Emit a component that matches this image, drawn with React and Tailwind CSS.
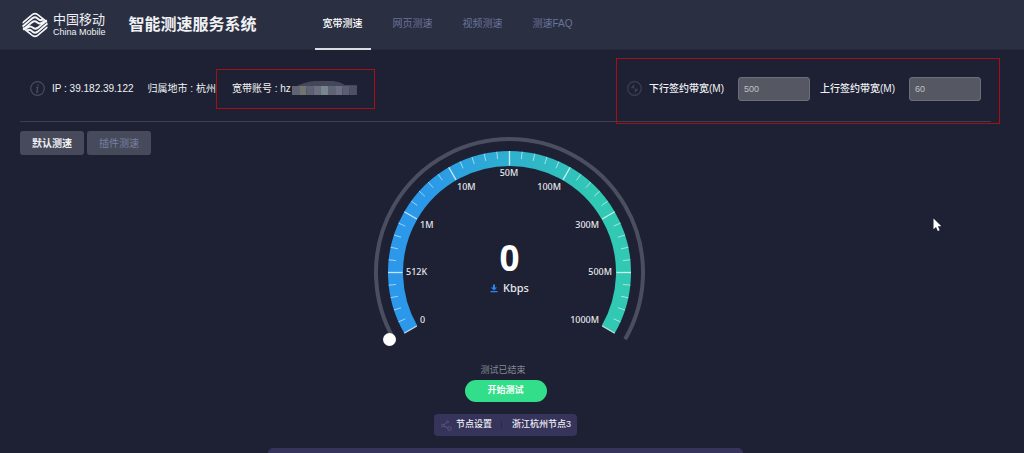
const NAV = ["宽带测速", "网页测速", "视频测速", "测速FAQ"];

// gauge geometry
const CX = 143.5;
const CY = 141.5;
const TRACK_R = 133.5;
const BAND_R = 114;
const BAND_OUTER = 121.5;

const LABELS = [
  { text: "0", x: 54, y: 192, anchor: "start" },
  { text: "512K", x: 40, y: 144, anchor: "start" },
  { text: "1M", x: 54, y: 97, anchor: "start" },
  { text: "10M", x: 91, y: 59, anchor: "start" },
  { text: "50M", x: 143, y: 45, anchor: "middle" },
  { text: "100M", x: 195, y: 59, anchor: "end" },
  { text: "300M", x: 233, y: 97, anchor: "end" },
  { text: "500M", x: 246, y: 144, anchor: "end" },
  { text: "1000M", x: 233, y: 192, anchor: "end" },
];

const polar = (r, deg) => {
  const a = (deg * Math.PI) / 180;
  return [CX + r * Math.cos(a), CY + r * Math.sin(a)];
};

const arc = (r) => {
  const [x1, y1] = polar(r, 150);
  const [x2, y2] = polar(r, 30);
  return `M${x1} ${y1} A${r} ${r} 0 1 1 ${x2} ${y2}`;
};

const TICKS = Array.from({ length: 41 }, (_, i) => {
  const major = i % 5 === 0;
  const deg = 150 + i * 6;
  const [x1, y1] = polar(BAND_OUTER, deg);
  const [x2, y2] = polar(major ? 107 : 114, deg);
  return { major, x1, y1, x2, y2 };
});

// upper half of the emblem, the lower half is the same turned by 180deg
function LogoWaves() {
  return (
    <>
      <path d="M1 33 L31 8 Q39 2 47 8 L75 30" strokeWidth="5" />
      <path d="M1 44 L31 19 Q39 13 46 19 L51 23 Q57 27 63 22" strokeWidth="6" />
      <path d="M2 54 L30 31 Q38 25 45 31 Q53 38 61 32 L68 26" strokeWidth="6" />
    </>
  );
}

function Logo() {
  return (
    <svg width="26" height="26" viewBox="0 0 78 78" fill="none" stroke="#f4f5f8">
      <clipPath id="logo-clip">
        <path d="M28 3 Q39 -3 50 3 L70 18 Q78 26 78 39 Q78 52 70 60 L50 75 Q39 81 28 75 L8 60 Q0 52 0 39 Q0 26 8 18Z" />
      </clipPath>
      <g clipPath="url(#logo-clip)">
        <LogoWaves />
        <g transform="rotate(180 39 39)">
          <LogoWaves />
        </g>
      </g>
    </svg>
  );
}

function Mosaic() {
  const colors = ["#5f6475", "#70736f", "#5d6174", "#6a6f80", "#78868f", "#5f6376", "#6c6f83", "#5a5e70", "#4d5165"];
  return (
    <svg width="66" height="16" viewBox="0 0 66 16" aria-hidden="true">
      <path d="M2 7 Q12 1 24 0 H42 Q50 1 54 4 H66 V7Z" fill="#434759" />
      {colors.map((c, i) => (
        <rect key={i} x={1 + i * 7.2} y="5" width="7.3" height="9" fill={c} />
      ))}
    </svg>
  );
}

function Gauge() {
  return (
    <svg width="279" height="221" viewBox="0 0 279 221" className="font-['Noto_Sans',sans-serif]">
      <defs>
        <linearGradient id="band" gradientUnits="userSpaceOnUse" x1="60" y1="0" x2="230" y2="0">
          <stop offset="0" stopColor="#2b98ea" />
          <stop offset="1" stopColor="#31c9b3" />
        </linearGradient>
      </defs>
      <path d={arc(TRACK_R)} fill="none" stroke="#4b4e5f" strokeWidth="4" />
      <path d={arc(BAND_R)} fill="none" stroke="url(#band)" strokeWidth="15" />
      {TICKS.map(({ major, ...t }, i) => (
        <line key={i} {...t} stroke="#fff" strokeOpacity={major ? 0.75 : 0.55} strokeWidth={major ? 1.3 : 1} />
      ))}
      <circle cx="23.5" cy="208.5" r="6.5" fill="#fff" />
      {LABELS.map((l) => (
        <text key={l.text} x={l.x} y={l.y} textAnchor={l.anchor} fontSize="9" fontWeight="500" fill="#e6e7ec">
          {l.text}
        </text>
      ))}
      <text x={CX} y="140" textAnchor="middle" fontSize="35" fontWeight="700" fill="#fff">
        0
      </text>
      <path d="M127 153.5 h2 v3 h2.2 l-3.2 3 l-3.2 -3 h2.2z M124.5 160 h7 v1.2 h-7z" fill="#2b85f0" />
      <text x="137" y="161" fontSize="11" fontWeight="500" fill="#e6e7ec">
        Kbps
      </text>
    </svg>
  );
}

function BandwidthField({ id, label, value }) {
  return (
    <div className="flex items-center gap-[14px]">
      <label htmlFor={id} className="font-medium whitespace-nowrap">
        {label}
      </label>
      <input
        id={id}
        defaultValue={value}
        className="h-6 w-18 rounded-[3px] border border-[#6c6f7b] bg-[#555863] px-[5px] text-[9px] text-[#c0c1c5] outline-none"
      />
    </div>
  );
}

export default function App() {
  return (
    <div className="relative flex min-h-screen flex-col overflow-hidden bg-[#1d2133] font-['Liberation_Sans','Noto_Sans_CJK_SC',sans-serif] text-[10px] text-[#f0f1f4]">
      <header className="flex h-[50px] items-center border-b border-[#252939] bg-[#2b2f42] pl-[22px]">
        <div className="flex items-center gap-[5px]">
          <Logo />
          <div className="whitespace-nowrap">
            <div className="text-[13px] leading-[14px]">中国移动</div>
            <div className="text-[9px] leading-[10px]">China Mobile</div>
          </div>
        </div>
        <h1 className="ml-[23px] text-base font-bold whitespace-nowrap">智能测速服务系统</h1>
        <nav className="ml-[58px] flex gap-[14px]">
          {NAV.map((item, i) => (
            <a
              key={item}
              href="#"
              className={[
                "flex h-[50px] w-14 items-center justify-center border-b-2 whitespace-nowrap",
                i === 0 ? "border-[#dcdde2] font-medium text-white" : "border-transparent text-[#69749a]",
              ].join(" ")}
            >
              {item}
            </a>
          ))}
        </nav>
      </header>

      <main className="flex flex-1 flex-col pr-[33px] pl-5">
        <section className="flex h-18 items-center justify-between border-b border-[#3b3f50] px-[10px] pt-[6px]">
          <div className="flex items-center whitespace-nowrap">
            <svg width="15" height="15" viewBox="0 0 15 15" fill="none" stroke="#484c5c">
              <circle cx="7.5" cy="7.5" r="6.8" strokeWidth="1.2" />
              <path d="M8.3 3.5 L8 4.8 M6.3 6.5 H7.8 L6.8 11 H8.3" strokeWidth="1.3" />
            </svg>
            <span className="ml-[7px]">IP : 39.182.39.122</span>
            <span className="ml-[14px]">归属地市 : 杭州</span>
            <span className="relative ml-4 flex h-4 items-center">
              宽带账号 : hz
              <Mosaic />
              <span className="absolute -inset-y-3 -right-[18px] -left-4 border border-[#a50f16]" />
            </span>
          </div>

          <div className="relative flex items-center gap-[10px]">
            <div className="flex items-center gap-[7px]">
              <svg width="15" height="15" viewBox="0 0 15 15" fill="none" stroke="#3c4051">
                <circle cx="7.5" cy="7.5" r="6.8" strokeWidth="1.2" />
                <path d="M4.5 7 L6.5 4.8 V7.5 M10.5 8 L8.5 10.2 V7.5" strokeWidth="1.3" />
              </svg>
              <BandwidthField id="down" label="下行签约带宽(M)" value="500" />
            </div>
            <BandwidthField id="up" label="上行签约带宽(M)" value="60" />
            <span className="pointer-events-none absolute -top-[19px] -right-[19px] -bottom-[23px] -left-[11px] border border-[#a50f16]" />
          </div>
        </section>

        <section className="grid grid-cols-[1fr_auto_1fr] pt-[9px]">
          <div className="flex items-start gap-[3px]">
            <button type="button" className="h-6 w-16 rounded-[3px] bg-[#474a5a] font-bold">
              默认测速
            </button>
            <button type="button" className="h-6 w-16 rounded-[3px] bg-[#474a5a] text-[#7681a3]">
              插件测速
            </button>
          </div>
          <Gauge />
        </section>

        <section className="flex flex-col items-center text-[9px]">
          <p className="mt-2 pr-[5px] leading-5 text-[#858893]">测试已结束</p>
          <button type="button" className="h-[22px] w-[82px] rounded-full bg-[#33de8a] font-bold text-white">
            开始测试
          </button>
          <div className="mt-3 flex h-[22px] w-[143px] items-center rounded bg-[#37345c] pl-[7px] whitespace-nowrap">
            <svg width="11" height="11" viewBox="0 0 11 11" fill="none" stroke="#5a577c">
              <circle cx="1.8" cy="5.5" r="1.3" />
              <circle cx="6.5" cy="1.8" r="1" />
              <circle cx="8.5" cy="8.5" r="1.8" />
              <path d="M3 4.8 L5.5 2.5 M3 6 L6.8 7.8" />
            </svg>
            <button type="button" className="ml-1 font-medium">
              节点设置
            </button>
            <span className="mr-[10px] ml-[9px] h-2 w-px bg-[#2c2a4c]" />
            <span className="font-medium">浙江杭州节点3</span>
          </div>
        </section>

        <section className="mt-3 min-h-1 w-[475px] flex-1 self-center rounded-t-lg bg-[#37345c]" />
      </main>

      {/* mouse pointer */}
      <svg className="pointer-events-none absolute top-[218px] left-[933px]" width="9" height="14" viewBox="0 0 9 14" fill="#fff">
        <path d="M0.5 0.5 V11.2 L3 9 L4.8 13 L6.6 12.2 L4.9 8.3 H8.3Z" />
      </svg>
    </div>
  );
}
